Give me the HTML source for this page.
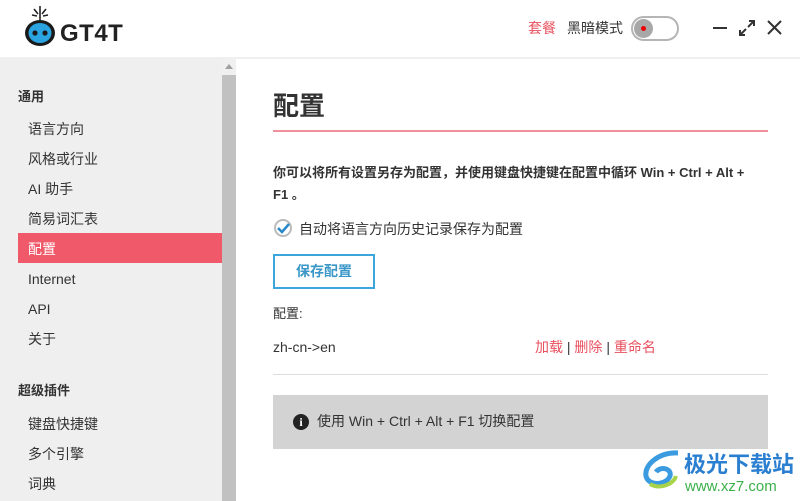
<!DOCTYPE html>
<html><head><meta charset="utf-8"><style>
*{margin:0;padding:0;box-sizing:border-box}
body{width:800px;height:501px;overflow:hidden;background:#fff;font-family:"Liberation Sans","Noto Sans CJK SC",sans-serif;color:#333;position:relative;font-size:14px}
.abs{position:absolute;line-height:20px}
.side{left:0;top:58px;width:222px;height:443px;background:#efefef}
.sb{left:222px;top:58px;width:14px;height:443px;background:#f0f0f0}
.sbt{left:222px;top:75px;width:14px;height:426px;background:#c1c1c1}
.it{position:absolute;left:28px;font-size:14px;color:#333;line-height:20px}
.hd{position:absolute;left:18px;font-size:13px;font-weight:bold;color:#333;line-height:20px}
</style></head><body>
<div class="abs" style="left:0;top:57px;width:800px;height:2px;background:#efefef"></div>
<svg class="abs" style="left:24px;top:4px" width="34" height="44" viewBox="0 0 34 44">
<g stroke="#222" stroke-width="1.6"><line x1="16" y1="2" x2="16" y2="16"/><line x1="10" y1="5" x2="14" y2="10"/><line x1="22" y1="5" x2="18" y2="10"/><line x1="8" y1="11" x2="13" y2="12"/><line x1="24" y1="11" x2="19" y2="12"/></g>
<ellipse cx="16" cy="29" rx="15" ry="13" fill="#1a1a1a"/><ellipse cx="16" cy="29" rx="11.5" ry="10" fill="#2aa3e0"/>
<circle cx="11" cy="29" r="2.6" fill="#1a1a1a"/><circle cx="21" cy="29" r="2.6" fill="#1a1a1a"/></svg>
<div class="abs" style="left:60px;top:21px;font-size:24px;font-weight:bold;color:#222;letter-spacing:0.5px;line-height:26px">GT4T</div>
<div class="abs" style="left:528px;top:18px;font-size:14px;color:#e8515f">套餐</div>
<div class="abs" style="left:567px;top:18px;font-size:14px;color:#333">黑暗模式</div>
<div class="abs" style="left:631px;top:16px;width:48px;height:25px;border:2px solid #b5b5b5;border-radius:13px"></div>
<div class="abs" style="left:634px;top:19px;width:19px;height:19px;border-radius:50%;background:#a8a8a8"></div>
<div class="abs" style="left:641px;top:26px;width:5px;height:5px;border-radius:50%;background:#e00"></div>
<div class="abs" style="left:713px;top:27px;width:14px;height:2px;background:#333"></div>
<svg class="abs" style="left:738px;top:19px" width="18" height="18" viewBox="0 0 18 18" fill="none" stroke="#333" stroke-width="2"><path d="M10 8L16 2M11 2h5v5M8 10L2 16M2 11v5h5"/></svg>
<svg class="abs" style="left:767px;top:20px" width="15" height="15" viewBox="0 0 15 15" stroke="#333" stroke-width="2"><path d="M1 1L14 14M14 1L1 14"/></svg>
<div class="abs side">
<div class="hd" style="top:29px">通用</div>
<div class="it" style="top:61px">语言方向</div>
<div class="it" style="top:91px">风格或行业</div>
<div class="it" style="top:121px">AI 助手</div>
<div class="it" style="top:151px">简易词汇表</div>
<div style="position:absolute;left:18px;top:175px;width:204px;height:30px;background:#f0596a"></div>
<div class="it" style="top:181px;color:#fff">配置</div>
<div class="it" style="top:211px">Internet</div>
<div class="it" style="top:241px">API</div>
<div class="it" style="top:271px">关于</div>
<div class="hd" style="top:323px">超级插件</div>
<div class="it" style="top:356px">键盘快捷键</div>
<div class="it" style="top:386px">多个引擎</div>
<div class="it" style="top:416px">词典</div>
</div>
<div class="abs sb"></div><div class="abs sbt"></div>
<div class="abs" style="left:225px;top:64px;width:0;height:0;border-left:4px solid transparent;border-right:4px solid transparent;border-bottom:5px solid #a0a0a0"></div>
<div class="abs" style="left:273px;top:90px;font-size:26px;font-weight:bold;color:#333;line-height:32px">配置</div>
<div class="abs" style="left:273px;top:130px;width:495px;height:2px;background:#f0909a"></div>
<div class="abs" style="left:273px;top:162px;width:490px;font-size:13px;font-weight:bold;line-height:22px;color:#333">你可以将所有设置另存为配置，并使用键盘快捷键在配置中循环 Win + Ctrl + Alt + F1 。</div>
<div class="abs" style="left:274px;top:219px;width:18px;height:18px;border-radius:50%;border:2px solid #bbb"></div>
<svg class="abs" style="left:277px;top:222px" width="13" height="12" viewBox="0 0 13 12"><path d="M1 6L5 10L12 2" fill="none" stroke="#2a88c8" stroke-width="2.5"/></svg>
<div class="abs" style="left:299px;top:219px;font-size:14px">自动将语言方向历史记录保存为配置</div>
<div class="abs" style="left:273px;top:254px;width:102px;height:35px;border:2px solid #3aa6db;color:#3a97c8;font-size:14px;font-weight:bold;text-align:center;line-height:31px">保存配置</div>
<div class="abs" style="left:273px;top:304px;font-size:13px">配置:</div>
<div class="abs" style="left:273px;top:337px;font-size:14px">zh-cn-&gt;en</div>
<div class="abs" style="left:535px;top:337px;font-size:14px;color:#e8515f">加载 <span style="color:#333">|</span> 删除 <span style="color:#333">|</span> 重命名</div>
<div class="abs" style="left:273px;top:374px;width:495px;height:1px;background:#ddd"></div>
<div class="abs" style="left:273px;top:395px;width:495px;height:54px;background:#d3d3d3"></div>
<div class="abs" style="left:293px;top:414px;width:16px;height:16px;border-radius:50%;background:#222;color:#fff;font-size:12px;font-weight:bold;text-align:center;line-height:16px;font-family:'Liberation Serif',serif">i</div>
<div class="abs" style="left:317px;top:411px;font-size:14px">使用 Win + Ctrl + Alt + F1 切换配置</div>
<svg class="abs" style="left:640px;top:450px" width="42" height="40" viewBox="0 0 42 40"><path d="M38 3C20 2 4 14 6 26C8 36 26 36 30 26C32 18 20 16 16 22" fill="none" stroke="#3a9be0" stroke-width="5"/><path d="M10 34C20 40 34 34 36 26" fill="none" stroke="#a8d44a" stroke-width="4"/></svg>
<div class="abs" style="left:684px;top:452px;font-size:22px;font-weight:bold;color:#2a7fd0;line-height:26px">极光下载站</div>
<div class="abs" style="left:685px;top:477px;font-size:15px;color:#3bb04a">www.xz7.com</div>
</body></html>
